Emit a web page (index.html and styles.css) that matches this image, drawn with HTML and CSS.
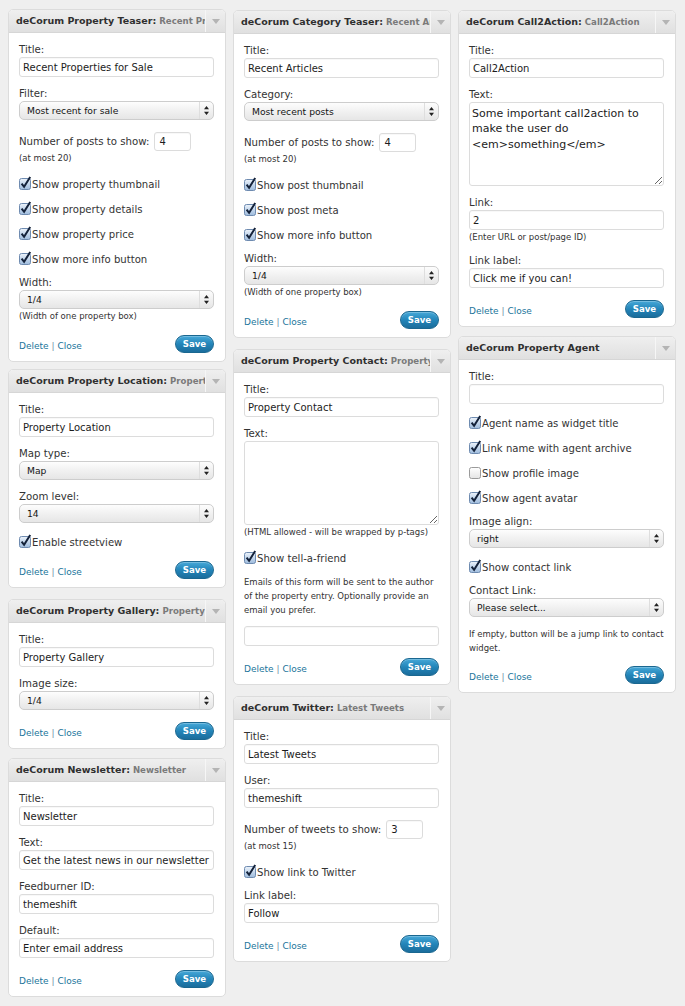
FILE: index.html
```html
<!DOCTYPE html>
<html>
<head>
<meta charset="utf-8">
<title>Widgets</title>
<link rel="stylesheet" href="styles.css">
</head>
<body>
<svg class="defs" width="0" height="0">
  <defs>
    <linearGradient id="cbOn" x1="0" y1="0" x2="0" y2="1">
      <stop offset="0" stop-color="#eef4fb"/>
      <stop offset="0.5" stop-color="#c3d6ec"/>
      <stop offset="1" stop-color="#9ebbdc"/>
    </linearGradient>
    <linearGradient id="cbOff" x1="0" y1="0" x2="0" y2="1">
      <stop offset="0" stop-color="#ffffff"/>
      <stop offset="1" stop-color="#e4e4e4"/>
    </linearGradient>
  </defs>
</svg>
<div class="board">
  <!-- Column 1 -->
  <div class="col">
    <div class="widget mb-7">
      <div class="widget-top">
        <div class="widget-title">deCorum Property Teaser:<span class="in-title"> Recent Properties for Sale</span></div>
        <div class="widget-toggle"><svg width="8" height="5" viewBox="0 0 8 5"><path d="M0 0H8L4 5Z" fill="#b4b4b4"/></svg></div>
      </div>
      <div class="widget-inside">
        <div class="field"><label class="lbl">Title:</label><input class="txt" type="text" value="Recent Properties for Sale"></div>
        <div class="field"><label class="lbl">Filter:</label>
          <div class="sel"><span class="sel-val">Most recent for sale</span><span class="sel-arrows"><svg width="5" height="9" viewBox="0 0 5 9"><path d="M2.5 0L5 3.3H0Z M2.5 9L0 5.7H5Z" fill="#222"/></svg></span></div>
        </div>
        <div class="field">
          <div class="num-row"><span>Number of posts to show:</span><input class="txt num" type="text" value="4"></div>
          <div class="note">(at most 20)</div>
        </div>
        <div class="checks">
          <div class="chk"><svg class="cb" width="13" height="14" viewBox="0 0 13 14"><rect x="0.5" y="2.5" width="11" height="11" rx="2" fill="url(#cbOn)" stroke="#6e8bb0"/><path d="M2.6 7.6L5.1 10.8L11.2 1" fill="none" stroke="#14223a" stroke-width="2"/></svg><span>Show property thumbnail</span></div>
          <div class="chk"><svg class="cb" width="13" height="14" viewBox="0 0 13 14"><rect x="0.5" y="2.5" width="11" height="11" rx="2" fill="url(#cbOn)" stroke="#6e8bb0"/><path d="M2.6 7.6L5.1 10.8L11.2 1" fill="none" stroke="#14223a" stroke-width="2"/></svg><span>Show property details</span></div>
          <div class="chk"><svg class="cb" width="13" height="14" viewBox="0 0 13 14"><rect x="0.5" y="2.5" width="11" height="11" rx="2" fill="url(#cbOn)" stroke="#6e8bb0"/><path d="M2.6 7.6L5.1 10.8L11.2 1" fill="none" stroke="#14223a" stroke-width="2"/></svg><span>Show property price</span></div>
          <div class="chk"><svg class="cb" width="13" height="14" viewBox="0 0 13 14"><rect x="0.5" y="2.5" width="11" height="11" rx="2" fill="url(#cbOn)" stroke="#6e8bb0"/><path d="M2.6 7.6L5.1 10.8L11.2 1" fill="none" stroke="#14223a" stroke-width="2"/></svg><span>Show more info button</span></div>
        </div>
        <div class="field"><label class="lbl">Width:</label>
          <div class="sel"><span class="sel-val">1/4</span><span class="sel-arrows"><svg width="5" height="9" viewBox="0 0 5 9"><path d="M2.5 0L5 3.3H0Z M2.5 9L0 5.7H5Z" fill="#222"/></svg></span></div>
          <div class="note">(Width of one property box)</div>
        </div>
        <div class="actions"><span class="links"><a href="#">Delete</a> <span class="sep">|</span> <a href="#">Close</a></span><button class="btn" type="button">Save</button></div>
      </div>
    </div>

    <div class="widget mb-11">
      <div class="widget-top">
        <div class="widget-title">deCorum Property Location:<span class="in-title"> Property Location</span></div>
        <div class="widget-toggle"><svg width="8" height="5" viewBox="0 0 8 5"><path d="M0 0H8L4 5Z" fill="#b4b4b4"/></svg></div>
      </div>
      <div class="widget-inside">
        <div class="field"><label class="lbl">Title:</label><input class="txt" type="text" value="Property Location"></div>
        <div class="field"><label class="lbl">Map type:</label>
          <div class="sel"><span class="sel-val">Map</span><span class="sel-arrows"><svg width="5" height="9" viewBox="0 0 5 9"><path d="M2.5 0L5 3.3H0Z M2.5 9L0 5.7H5Z" fill="#222"/></svg></span></div>
        </div>
        <div class="field"><label class="lbl">Zoom level:</label>
          <div class="sel"><span class="sel-val">14</span><span class="sel-arrows"><svg width="5" height="9" viewBox="0 0 5 9"><path d="M2.5 0L5 3.3H0Z M2.5 9L0 5.7H5Z" fill="#222"/></svg></span></div>
        </div>
        <div class="checks">
          <div class="chk"><svg class="cb" width="13" height="14" viewBox="0 0 13 14"><rect x="0.5" y="2.5" width="11" height="11" rx="2" fill="url(#cbOn)" stroke="#6e8bb0"/><path d="M2.6 7.6L5.1 10.8L11.2 1" fill="none" stroke="#14223a" stroke-width="2"/></svg><span>Enable streetview</span></div>
        </div>
        <div class="actions"><span class="links"><a href="#">Delete</a> <span class="sep">|</span> <a href="#">Close</a></span><button class="btn" type="button">Save</button></div>
      </div>
    </div>

    <div class="widget mb-9">
      <div class="widget-top">
        <div class="widget-title">deCorum Property Gallery:<span class="in-title"> Property Gallery</span></div>
        <div class="widget-toggle"><svg width="8" height="5" viewBox="0 0 8 5"><path d="M0 0H8L4 5Z" fill="#b4b4b4"/></svg></div>
      </div>
      <div class="widget-inside">
        <div class="field"><label class="lbl">Title:</label><input class="txt" type="text" value="Property Gallery"></div>
        <div class="field"><label class="lbl">Image size:</label>
          <div class="sel"><span class="sel-val">1/4</span><span class="sel-arrows"><svg width="5" height="9" viewBox="0 0 5 9"><path d="M2.5 0L5 3.3H0Z M2.5 9L0 5.7H5Z" fill="#222"/></svg></span></div>
        </div>
        <div class="actions"><span class="links"><a href="#">Delete</a> <span class="sep">|</span> <a href="#">Close</a></span><button class="btn" type="button">Save</button></div>
      </div>
    </div>

    <div class="widget">
      <div class="widget-top">
        <div class="widget-title">deCorum Newsletter:<span class="in-title"> Newsletter</span></div>
        <div class="widget-toggle"><svg width="8" height="5" viewBox="0 0 8 5"><path d="M0 0H8L4 5Z" fill="#b4b4b4"/></svg></div>
      </div>
      <div class="widget-inside">
        <div class="field"><label class="lbl">Title:</label><input class="txt" type="text" value="Newsletter"></div>
        <div class="field"><label class="lbl">Text:</label><input class="txt" type="text" value="Get the latest news in our newsletter"></div>
        <div class="field"><label class="lbl">Feedburner ID:</label><input class="txt" type="text" value="themeshift"></div>
        <div class="field"><label class="lbl">Default:</label><input class="txt" type="text" value="Enter email address"></div>
        <div class="actions"><span class="links"><a href="#">Delete</a> <span class="sep">|</span> <a href="#">Close</a></span><button class="btn" type="button">Save</button></div>
      </div>
    </div>
  </div>

  <!-- Column 2 -->
  <div class="col col-shift">
    <div class="widget mb-11">
      <div class="widget-top">
        <div class="widget-title">deCorum Category Teaser:<span class="in-title"> Recent Articles</span></div>
        <div class="widget-toggle"><svg width="8" height="5" viewBox="0 0 8 5"><path d="M0 0H8L4 5Z" fill="#b4b4b4"/></svg></div>
      </div>
      <div class="widget-inside">
        <div class="field"><label class="lbl">Title:</label><input class="txt" type="text" value="Recent Articles"></div>
        <div class="field"><label class="lbl">Category:</label>
          <div class="sel"><span class="sel-val">Most recent posts</span><span class="sel-arrows"><svg width="5" height="9" viewBox="0 0 5 9"><path d="M2.5 0L5 3.3H0Z M2.5 9L0 5.7H5Z" fill="#222"/></svg></span></div>
        </div>
        <div class="field">
          <div class="num-row"><span>Number of posts to show:</span><input class="txt num" type="text" value="4"></div>
          <div class="note">(at most 20)</div>
        </div>
        <div class="checks">
          <div class="chk"><svg class="cb" width="13" height="14" viewBox="0 0 13 14"><rect x="0.5" y="2.5" width="11" height="11" rx="2" fill="url(#cbOn)" stroke="#6e8bb0"/><path d="M2.6 7.6L5.1 10.8L11.2 1" fill="none" stroke="#14223a" stroke-width="2"/></svg><span>Show post thumbnail</span></div>
          <div class="chk"><svg class="cb" width="13" height="14" viewBox="0 0 13 14"><rect x="0.5" y="2.5" width="11" height="11" rx="2" fill="url(#cbOn)" stroke="#6e8bb0"/><path d="M2.6 7.6L5.1 10.8L11.2 1" fill="none" stroke="#14223a" stroke-width="2"/></svg><span>Show post meta</span></div>
          <div class="chk"><svg class="cb" width="13" height="14" viewBox="0 0 13 14"><rect x="0.5" y="2.5" width="11" height="11" rx="2" fill="url(#cbOn)" stroke="#6e8bb0"/><path d="M2.6 7.6L5.1 10.8L11.2 1" fill="none" stroke="#14223a" stroke-width="2"/></svg><span>Show more info button</span></div>
        </div>
        <div class="field"><label class="lbl">Width:</label>
          <div class="sel"><span class="sel-val">1/4</span><span class="sel-arrows"><svg width="5" height="9" viewBox="0 0 5 9"><path d="M2.5 0L5 3.3H0Z M2.5 9L0 5.7H5Z" fill="#222"/></svg></span></div>
          <div class="note">(Width of one property box)</div>
        </div>
        <div class="actions"><span class="links"><a href="#">Delete</a> <span class="sep">|</span> <a href="#">Close</a></span><button class="btn" type="button">Save</button></div>
      </div>
    </div>

    <div class="widget mb-11">
      <div class="widget-top">
        <div class="widget-title">deCorum Property Contact:<span class="in-title"> Property Contact</span></div>
        <div class="widget-toggle"><svg width="8" height="5" viewBox="0 0 8 5"><path d="M0 0H8L4 5Z" fill="#b4b4b4"/></svg></div>
      </div>
      <div class="widget-inside">
        <div class="field"><label class="lbl">Title:</label><input class="txt" type="text" value="Property Contact"></div>
        <div class="field"><label class="lbl">Text:</label><textarea class="area"></textarea>
          <div class="note">(HTML allowed - will be wrapped by p-tags)</div>
        </div>
        <div class="checks">
          <div class="chk"><svg class="cb" width="13" height="14" viewBox="0 0 13 14"><rect x="0.5" y="2.5" width="11" height="11" rx="2" fill="url(#cbOn)" stroke="#6e8bb0"/><path d="M2.6 7.6L5.1 10.8L11.2 1" fill="none" stroke="#14223a" stroke-width="2"/></svg><span>Show tell-a-friend</span></div>
        </div>
        <p class="para">Emails of this form will be sent to the author of the property entry. Optionally provide an email you prefer.</p>
        <div class="field"><input class="txt" type="text" value=""></div>
        <div class="actions"><span class="links"><a href="#">Delete</a> <span class="sep">|</span> <a href="#">Close</a></span><button class="btn" type="button">Save</button></div>
      </div>
    </div>

    <div class="widget">
      <div class="widget-top">
        <div class="widget-title">deCorum Twitter:<span class="in-title"> Latest Tweets</span></div>
        <div class="widget-toggle"><svg width="8" height="5" viewBox="0 0 8 5"><path d="M0 0H8L4 5Z" fill="#b4b4b4"/></svg></div>
      </div>
      <div class="widget-inside">
        <div class="field"><label class="lbl">Title:</label><input class="txt" type="text" value="Latest Tweets"></div>
        <div class="field"><label class="lbl">User:</label><input class="txt" type="text" value="themeshift"></div>
        <div class="field">
          <div class="num-row"><span>Number of tweets to show:</span><input class="txt num" type="text" value="3"></div>
          <div class="note">(at most 15)</div>
        </div>
        <div class="checks">
          <div class="chk"><svg class="cb" width="13" height="14" viewBox="0 0 13 14"><rect x="0.5" y="2.5" width="11" height="11" rx="2" fill="url(#cbOn)" stroke="#6e8bb0"/><path d="M2.6 7.6L5.1 10.8L11.2 1" fill="none" stroke="#14223a" stroke-width="2"/></svg><span>Show link to Twitter</span></div>
        </div>
        <div class="field"><label class="lbl">Link label:</label><input class="txt" type="text" value="Follow"></div>
        <div class="actions"><span class="links"><a href="#">Delete</a> <span class="sep">|</span> <a href="#">Close</a></span><button class="btn" type="button">Save</button></div>
      </div>
    </div>
  </div>

  <!-- Column 3 -->
  <div class="col col-shift">
    <div class="widget mb-9">
      <div class="widget-top">
        <div class="widget-title">deCorum Call2Action:<span class="in-title"> Call2Action</span></div>
        <div class="widget-toggle"><svg width="8" height="5" viewBox="0 0 8 5"><path d="M0 0H8L4 5Z" fill="#b4b4b4"/></svg></div>
      </div>
      <div class="widget-inside">
        <div class="field"><label class="lbl">Title:</label><input class="txt" type="text" value="Call2Action"></div>
        <div class="field"><label class="lbl">Text:</label><textarea class="area">Some important call2action to make the user do &lt;em&gt;something&lt;/em&gt;</textarea></div>
        <div class="field"><label class="lbl">Link:</label><input class="txt" type="text" value="2">
          <div class="note">(Enter URL or post/page ID)</div>
        </div>
        <div class="field"><label class="lbl">Link label:</label><input class="txt" type="text" value="Click me if you can!"></div>
        <div class="actions"><span class="links"><a href="#">Delete</a> <span class="sep">|</span> <a href="#">Close</a></span><button class="btn" type="button">Save</button></div>
      </div>
    </div>

    <div class="widget">
      <div class="widget-top">
        <div class="widget-title">deCorum Property Agent</div>
        <div class="widget-toggle"><svg width="8" height="5" viewBox="0 0 8 5"><path d="M0 0H8L4 5Z" fill="#b4b4b4"/></svg></div>
      </div>
      <div class="widget-inside">
        <div class="field"><label class="lbl">Title:</label><input class="txt" type="text" value=""></div>
        <div class="checks">
          <div class="chk"><svg class="cb" width="13" height="14" viewBox="0 0 13 14"><rect x="0.5" y="2.5" width="11" height="11" rx="2" fill="url(#cbOn)" stroke="#6e8bb0"/><path d="M2.6 7.6L5.1 10.8L11.2 1" fill="none" stroke="#14223a" stroke-width="2"/></svg><span>Agent name as widget title</span></div>
          <div class="chk"><svg class="cb" width="13" height="14" viewBox="0 0 13 14"><rect x="0.5" y="2.5" width="11" height="11" rx="2" fill="url(#cbOn)" stroke="#6e8bb0"/><path d="M2.6 7.6L5.1 10.8L11.2 1" fill="none" stroke="#14223a" stroke-width="2"/></svg><span>Link name with agent archive</span></div>
          <div class="chk"><svg class="cb" width="13" height="14" viewBox="0 0 13 14"><rect x="0.5" y="2.5" width="11" height="11" rx="2" fill="url(#cbOff)" stroke="#9a9a9a"/></svg><span>Show profile image</span></div>
          <div class="chk"><svg class="cb" width="13" height="14" viewBox="0 0 13 14"><rect x="0.5" y="2.5" width="11" height="11" rx="2" fill="url(#cbOn)" stroke="#6e8bb0"/><path d="M2.6 7.6L5.1 10.8L11.2 1" fill="none" stroke="#14223a" stroke-width="2"/></svg><span>Show agent avatar</span></div>
        </div>
        <div class="field"><label class="lbl">Image align:</label>
          <div class="sel"><span class="sel-val">right</span><span class="sel-arrows"><svg width="5" height="9" viewBox="0 0 5 9"><path d="M2.5 0L5 3.3H0Z M2.5 9L0 5.7H5Z" fill="#222"/></svg></span></div>
        </div>
        <div class="checks">
          <div class="chk"><svg class="cb" width="13" height="14" viewBox="0 0 13 14"><rect x="0.5" y="2.5" width="11" height="11" rx="2" fill="url(#cbOn)" stroke="#6e8bb0"/><path d="M2.6 7.6L5.1 10.8L11.2 1" fill="none" stroke="#14223a" stroke-width="2"/></svg><span>Show contact link</span></div>
        </div>
        <div class="field"><label class="lbl">Contact Link:</label>
          <div class="sel"><span class="sel-val">Please select...</span><span class="sel-arrows"><svg width="5" height="9" viewBox="0 0 5 9"><path d="M2.5 0L5 3.3H0Z M2.5 9L0 5.7H5Z" fill="#222"/></svg></span></div>
        </div>
        <p class="para">If empty, button will be a jump link to contact widget.</p>
        <div class="actions"><span class="links"><a href="#">Delete</a> <span class="sep">|</span> <a href="#">Close</a></span><button class="btn" type="button">Save</button></div>
      </div>
    </div>
  </div>
</div>
</body>
</html>
```

FILE: styles.css
```css
* {
  box-sizing: border-box;
}

html, body {
  margin: 0;
  padding: 0;
}

body {
  background: #efefef;
  font-family: "DejaVu Sans", "Verdana", sans-serif;
  font-size: 10.2px;
  color: #333;
}

.defs {
  display: block;
  width: 0;
  height: 0;
  overflow: hidden;
}

.board {
  display: flex;
  align-items: flex-start;
  gap: 7px;
  padding: 9px 8px 0 8px;
}

.col {
  width: 218px;
  flex: none;
  display: flex;
  flex-direction: column;
}

.col-shift {
  padding-top: 1px;
}

.widget {
  background: #fff;
  border: 1px solid #dcdcdc;
  border-radius: 5px;
  overflow: hidden;
}

.mb-7 { margin-bottom: 7px; }
.mb-9 { margin-bottom: 9px; }
.mb-11 { margin-bottom: 11px; }

.widget-top {
  display: flex;
  height: 23px;
  background: linear-gradient(#efefef, #e0e0e0);
  border-bottom: 1px solid #d6d6d6;
}

.widget-title {
  flex: 1;
  min-width: 0;
  overflow: hidden;
  white-space: nowrap;
  padding-left: 7px;
  line-height: 22px;
  font-size: 9.5px;
  font-weight: bold;
  color: #2f2f2f;
}

.in-title {
  font-size: 8.6px;
  color: #7a7a7a;
}

.widget-toggle {
  width: 20px;
  flex: none;
  border-left: 1px solid #f6f6f6;
  display: flex;
  align-items: center;
  justify-content: center;
}

.widget-toggle svg {
  display: block;
  margin-top: 1px;
}

.widget-inside {
  display: flex;
  flex-direction: column;
  padding: 10px 11px 8px 10px;
}

.field {
  margin-bottom: 10px;
}

.lbl {
  display: block;
  line-height: 14px;
  color: #333;
}

.txt {
  display: block;
  width: 100%;
  height: 20px;
  margin: 0;
  padding: 0 3px;
  border: 1px solid #dcdcdc;
  border-radius: 3px;
  background: #fff;
  font-family: "DejaVu Sans", "Verdana", sans-serif;
  font-size: 10px;
  color: #1c1c1c;
  outline: none;
  box-shadow: inset 0 1px 1px rgba(0, 0, 0, 0.03);
}

.area {
  display: block;
  width: 100%;
  height: 84px;
  margin: 0;
  padding: 3px 2px;
  border: 1px solid #dcdcdc;
  border-radius: 3px;
  background: #fff;
  font-family: "DejaVu Sans", "Verdana", sans-serif;
  font-size: 11px;
  line-height: 15.4px;
  color: #1c1c1c;
  resize: vertical;
  outline: none;
}

.sel {
  display: flex;
  align-items: center;
  height: 19px;
  border: 1px solid #cdcdcd;
  border-radius: 5px;
  background: linear-gradient(#fdfdfd, #f2f2f2 45%, #e6e6e6);
  padding-left: 7px;
  font-size: 9.2px;
  color: #141414;
}

.sel-val {
  flex: 1;
  white-space: nowrap;
  overflow: hidden;
}

.sel-arrows {
  width: 14px;
  height: 100%;
  flex: none;
  border-left: 1px solid #dedede;
  display: flex;
  align-items: center;
  justify-content: center;
}

.sel-arrows svg {
  display: block;
}

.num-row {
  display: flex;
  align-items: center;
  height: 19px;
  margin-top: 2px;
}

.num {
  width: 37px;
  height: 19px;
  margin-left: 5px;
  padding-left: 4px;
}

.note {
  font-size: 8.5px;
  line-height: 14px;
  color: #333;
}

.checks {
  display: flex;
  flex-direction: column;
  gap: 7px;
  margin-bottom: 8px;
}

.chk {
  display: flex;
  align-items: center;
  height: 18px;
  font-size: 10.1px;
  color: #333;
}

.cb {
  display: block;
  flex: none;
  margin-top: -2px;
}

.para {
  margin: 0 0 9px 0;
  font-size: 8.5px;
  line-height: 14px;
  color: #333;
}

.actions {
  display: flex;
  align-items: center;
  justify-content: space-between;
  height: 18px;
  margin-top: 2px;
}

.links {
  font-size: 9px;
  padding-top: 3px;
  color: #7d9bb3;
}

.links a {
  color: #21759b;
  text-decoration: none;
}

.sep {
  color: #6f8ea6;
}

.btn {
  width: 39px;
  height: 18px;
  margin: 0;
  padding: 0;
  border: 1px solid #1a6790;
  border-radius: 9px;
  background: linear-gradient(#46a8d8, #2385b9 50%, #1b6d9c);
  color: #fff;
  font-family: "DejaVu Sans", "Verdana", sans-serif;
  font-size: 8.6px;
  font-weight: bold;
  line-height: 16px;
  text-align: center;
  box-shadow: inset 0 1px 0 rgba(255, 255, 255, 0.25);
}
```
